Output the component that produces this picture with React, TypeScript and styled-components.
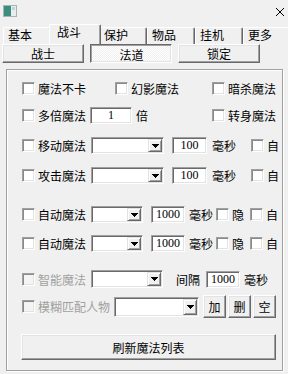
import React from "react";
import styled, { createGlobalStyle, css } from "styled-components";

const GlobalStyle = createGlobalStyle`
  html, body { margin: 0; padding: 0; background: #f0f0f0; }
  body {
    width: 288px; height: 374px; overflow: hidden;
    font-family: "Noto Sans CJK SC", "Noto Sans", sans-serif;
    font-size: 12px; color: #000;
  }
`;

const Window = styled.div`
  width: 288px;
  height: 374px;
  background: #f0f0f0;
  display: flex;
  flex-direction: column;
  box-sizing: border-box;
`;

const TitleBar = styled.div`
  height: 24px;
  display: flex;
  justify-content: space-between;
  align-items: flex-start;
  padding: 0 3px 0 3px;
  box-sizing: border-box;
`;

const AppIcon = styled.svg`
  margin-top: 5px;
  display: block;
`;

const CloseIcon = styled.svg`
  margin-top: 7px;
  display: block;
`;

const TabStrip = styled.div`
  height: 20px;
  display: flex;
  align-items: flex-end;
  padding-left: 3px;
  overflow: hidden;
`;

const Tab = styled.div<{ $active?: boolean }>`
  box-sizing: border-box;
  flex: none;
  width: 48px;
  height: 17px;
  padding-left: 4px;
  line-height: 13px;
  background: #f0f0f0;
  border-top: 1px solid #fff;
  border-left: 1px solid #fff;
  border-right: 1px solid #696969;
  box-shadow: inset -1px 0 #a0a0a0;
  border-radius: 2px 2px 0 0;
  white-space: nowrap;
  ${(p) =>
    p.$active &&
    css`
      width: 52px;
      height: 20px;
      margin: 0 -2px;
      padding-left: 7px;
      line-height: 14px;
      position: relative;
      z-index: 1;
    `}
`;

const ModeBar = styled.div`
  display: flex;
  gap: 6px;
  padding-left: 2px;
  height: 19px;
`;

const Button = styled.div<{ $w: number; $h: number; $ml?: number; $pressed?: boolean }>`
  box-sizing: border-box;
  flex: none;
  width: ${(p) => p.$w}px;
  height: ${(p) => p.$h}px;
  margin-left: ${(p) => p.$ml ?? 0}px;
  display: flex;
  align-items: center;
  justify-content: center;
  background: #f0f0f0;
  border: 1px solid;
  border-color: #fff #696969 #696969 #fff;
  box-shadow: inset -1px -1px #a0a0a0, inset 1px 1px #e3e3e3;
  white-space: nowrap;
  ${(p) =>
    p.$pressed &&
    css`
      border-color: #696969 #fff #fff #696969;
      box-shadow: inset 1px 1px #a0a0a0, inset -1px -1px #e3e3e3;
      background-color: #fff;
      background-image: repeating-conic-gradient(#f0f0f0 0 25%, #fff 0 50%);
      background-size: 2px 2px;
      padding: 1px 0 0 1px;
    `}
`;

const GroupBox = styled.div`
  box-sizing: border-box;
  margin: 6px 0 0 6px;
  width: 277px;
  height: 302px;
  border: 1px solid #a0a0a0;
  box-shadow: inset 1px 1px #fff, 1px 1px #fff;
  padding-left: 15px;
  display: flex;
  flex-direction: column;
`;

const Row = styled.div<{ $top: number; $h?: number }>`
  display: flex;
  align-items: center;
  margin-top: ${(p) => p.$top}px;
  height: ${(p) => p.$h ?? 17}px;
  flex: none;
`;

const CheckLabel = styled.label<{ $ml?: number; $disabled?: boolean }>`
  display: flex;
  align-items: center;
  gap: 3px;
  flex: none;
  margin-left: ${(p) => p.$ml ?? 0}px;
  color: ${(p) => (p.$disabled ? "#a0a0a0" : "#000")};
  white-space: nowrap;
  line-height: 17px;
`;

const CheckBox = styled.span<{ $disabled?: boolean }>`
  box-sizing: border-box;
  width: 13px;
  height: 13px;
  flex: none;
  background: ${(p) => (p.$disabled ? "#f4f4f4" : "#fff")};
  border: 1px solid;
  border-color: #a0a0a0 #fff #fff #a0a0a0;
  box-shadow: inset 1px 1px #8a8a8a, inset -1px -1px #e3e3e3;
`;

const Text = styled.span<{ $ml?: number }>`
  flex: none;
  margin-left: ${(p) => p.$ml ?? 0}px;
  white-space: nowrap;
  line-height: 17px;
`;

const sunken = css`
  box-sizing: border-box;
  background: #fff;
  border: 1px solid;
  border-color: #a0a0a0 #fff #fff #a0a0a0;
  box-shadow: inset 1px 1px #696969, inset -1px -1px #e3e3e3;
`;

const Edit = styled.div<{ $w: number; $ml?: number }>`
  ${sunken};
  flex: none;
  width: ${(p) => p.$w}px;
  height: 17px;
  margin-left: ${(p) => p.$ml ?? 0}px;
  font-family: "Liberation Serif", "DejaVu Serif", serif;
  font-size: 12px;
  line-height: 15px;
  text-align: center;
`;

const Combo = styled.div<{ $w: number; $h?: number; $ml?: number }>`
  ${sunken};
  flex: none;
  width: ${(p) => p.$w}px;
  height: ${(p) => p.$h ?? 17}px;
  margin-left: ${(p) => p.$ml ?? 0}px;
  padding: 1px;
  display: flex;
  justify-content: flex-end;
`;

const DropButton = styled.div`
  box-sizing: border-box;
  width: 14px;
  height: 100%;
  background: #f0f0f0;
  border: 1px solid;
  border-color: #e3e3e3 #696969 #696969 #e3e3e3;
  box-shadow: inset 1px 1px #fff, inset -1px -1px #a0a0a0;
  display: flex;
  align-items: center;
  justify-content: center;
`;

const Arrow = () => (
  <svg width="7" height="4" viewBox="0 0 7 4" shapeRendering="crispEdges">
    <polygon points="0,0 7,0 3.5,4" fill="#000" />
  </svg>
);

const Check = ({ label, ml, disabled }: { label: string; ml?: number; disabled?: boolean }) => (
  <CheckLabel $ml={ml} $disabled={disabled}>
    <CheckBox $disabled={disabled} />
    {label}
  </CheckLabel>
);

const DropDown = ({ w, h, ml }: { w: number; h?: number; ml?: number }) => (
  <Combo $w={w} $h={h} $ml={ml}>
    <DropButton>
      <Arrow />
    </DropButton>
  </Combo>
);

const tabs = ["基本", "战斗", "保护", "物品", "挂机", "更多"];

export default function App() {
  return (
    <Window>
      <GlobalStyle />
      <TitleBar>
        <AppIcon width="14" height="12" viewBox="0 0 14 12" shapeRendering="crispEdges">
          <rect x="0.5" y="0.5" width="13" height="11" fill="#e6eeee" stroke="#a8b4b4" />
          <rect x="1" y="1" width="7" height="10" fill="#3d8d7e" />
          <rect x="9" y="2" width="3" height="3" fill="#bcd4dc" />
        </AppIcon>
        <CloseIcon width="10" height="10" viewBox="0 0 10 10">
          <path d="M1 1 L9 9 M9 1 L1 9" stroke="#000" strokeWidth="1" />
        </CloseIcon>
      </TitleBar>
      <TabStrip>
        {tabs.map((t) => (
          <Tab key={t} $active={t === "战斗"}>
            {t}
          </Tab>
        ))}
      </TabStrip>
      <ModeBar>
        <Button $w={82} $h={19}>战士</Button>
        <Button $w={82} $h={19} $pressed>法道</Button>
        <Button $w={82} $h={19}>锁定</Button>
      </ModeBar>
      <GroupBox>
        <Row $top={10}>
          <Check label="魔法不卡" />
          <Check label="幻影魔法" ml={29} />
          <Check label="暗杀魔法" ml={33} />
        </Row>
        <Row $top={10}>
          <Check label="多倍魔法" />
          <Edit $w={42} $ml={4}>1</Edit>
          <Text $ml={4}>倍</Text>
          <Check label="转身魔法" ml={64} />
        </Row>
        <Row $top={13}>
          <Check label="移动魔法" />
          <DropDown w={73} ml={5} />
          <Edit $w={35} $ml={8}>100</Edit>
          <Text $ml={5}>毫秒</Text>
          <Check label="自" ml={15} />
        </Row>
        <Row $top={13}>
          <Check label="攻击魔法" />
          <DropDown w={73} ml={5} />
          <Edit $w={35} $ml={8}>100</Edit>
          <Text $ml={5}>毫秒</Text>
          <Check label="自" ml={15} />
        </Row>
        <Row $top={22}>
          <Check label="自动魔法" />
          <DropDown w={52} ml={5} />
          <Edit $w={34} $ml={8}>1000</Edit>
          <Text $ml={4}>毫秒</Text>
          <Check label="隐" ml={3} />
          <Check label="自" ml={6} />
        </Row>
        <Row $top={12}>
          <Check label="自动魔法" />
          <DropDown w={52} ml={5} />
          <Edit $w={34} $ml={8}>1000</Edit>
          <Text $ml={4}>毫秒</Text>
          <Check label="隐" ml={3} />
          <Check label="自" ml={6} />
        </Row>
        <Row $top={18} $h={18}>
          <Check label="智能魔法" disabled />
          <DropDown w={72} h={18} ml={5} />
          <Text $ml={13}>间隔</Text>
          <Edit $w={34} $ml={6}>1000</Edit>
          <Text $ml={4}>毫秒</Text>
        </Row>
        <Row $top={7} $h={23}>
          <Check label="模糊匹配人物" disabled />
          <DropDown w={85} h={20} ml={4} />
          <Button $w={23} $h={23} $ml={4}>加</Button>
          <Button $w={23} $h={23} $ml={2}>删</Button>
          <Button $w={23} $h={23} $ml={2}>空</Button>
        </Row>
        <Row $top={16} $h={26}>
          <Button $w={255} $h={26} $ml={-1}>刷新魔法列表</Button>
        </Row>
      </GroupBox>
    </Window>
  );
}
